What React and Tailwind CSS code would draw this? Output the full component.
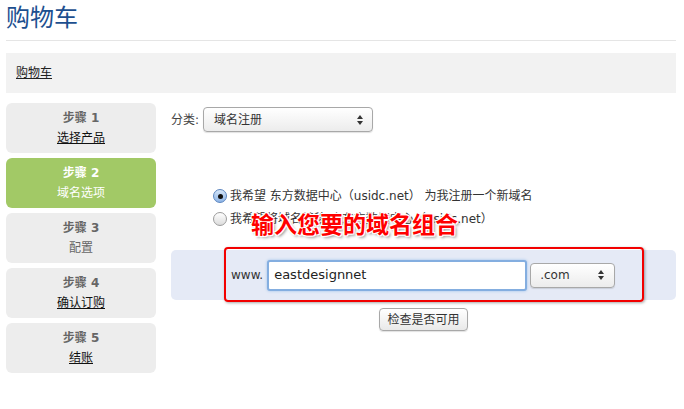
import React from 'react';

const font = 'font-["DejaVu_Sans","Noto_Sans_CJK_SC",sans-serif]';

const steps = [
  { n: 1, label: '选择产品', link: true },
  { n: 2, label: '域名选项', active: true },
  { n: 3, label: '配置' },
  { n: 4, label: '确认订购', link: true },
  { n: 5, label: '结账', link: true },
];

const Arrows = () => (
  <svg width="8" height="12" viewBox="0 0 8 12" className="shrink-0">
    <path d="M4 1 L7 5 L1 5 Z" fill="#333" />
    <path d="M4 11 L7 7 L1 7 Z" fill="#333" />
  </svg>
);

const Select = ({ value, className }) => (
  <div
    className={`flex items-center justify-between rounded-[4px] border border-[#a8a8a8] bg-gradient-to-b from-white to-[#ececec] shadow-[0_1px_1px_rgba(0,0,0,0.12)] ${className}`}
  >
    <span className="text-[12px] text-[#333]">{value}</span>
    <Arrows />
  </div>
);

const Radio = ({ checked }) =>
  checked ? (
    <span className="flex h-[14px] w-[14px] shrink-0 items-center justify-center rounded-full border border-[#5b85c0] bg-gradient-to-b from-[#d6e6f8] to-[#8db4e6]">
      <span className="h-[5px] w-[5px] rounded-full bg-[#111]" />
    </span>
  ) : (
    <span className="h-[14px] w-[14px] shrink-0 rounded-full border border-[#9c9c9c] bg-gradient-to-b from-white to-[#dcdcdc]" />
  );

export default function App() {
  return (
    <div className={`min-h-[409px] w-[684px] bg-white px-[6px] pr-[8px] ${font}`}>
      <h1 className="border-b border-[#e5e5e5] pb-[7px] pt-[3px] text-[24px] leading-[30px] font-normal text-[#1d4f8f]">
        购物车
      </h1>

      <div className="mt-[12px] flex h-[40px] items-center bg-[#f2f2f2] px-[10px]">
        <a href="#" className="text-[12px] text-[#222] underline">
          购物车
        </a>
      </div>

      <div className="mt-[10px] flex gap-[15px]">
        {/* steps */}
        <div className="flex w-[150px] shrink-0 flex-col gap-[5px]">
          {steps.map((s) => (
            <div
              key={s.n}
              className={`flex h-[50px] flex-col items-center justify-center gap-[4px] rounded-[6px] text-[12px] leading-[16px] ${
                s.active ? 'bg-[#a2c966] text-white' : 'bg-[#ededed] text-[#666]'
              }`}
            >
              <span className="font-bold">步骤 {s.n}</span>
              {s.link ? (
                <a href="#" className="text-[#111] underline">
                  {s.label}
                </a>
              ) : (
                <span>{s.label}</span>
              )}
            </div>
          ))}
        </div>

        {/* content */}
        <div className="relative flex-1">
          <div className="mt-[4px] flex h-[25px] items-center gap-[4px] text-[12px] text-[#444]">
            <span>分类:</span>
            <Select value="域名注册" className="h-[25px] w-[170px] pl-[10px] pr-[8px]" />
          </div>

          <div className="mt-[57px] flex flex-col gap-[9px] pl-[42px] text-[12px] text-[#333]">
            <label className="flex h-[14px] items-center gap-[3px]">
              <Radio checked />
              <span>我希望 东方数据中心（usidc.net） 为我注册一个新域名</span>
            </label>
            <label className="flex h-[14px] items-center gap-[3px]">
              <Radio />
              <span>我希望将域名转移到 东方数据中心（usidc.net）</span>
            </label>
          </div>

          <div className="mt-[24px] flex h-[50px] items-center rounded-[5px] bg-[#e5eaf6] pl-[60px]">
            <span className="text-[12px] text-[#333]">www.</span>
            <div className="ml-[4px] flex h-[31px] w-[260px] items-center rounded-[3px] border-2 border-[#84aee0] bg-white pl-[5px] shadow-[0_0_3px_#9cc0ea]">
              <span className="text-[13px] text-[#222]">eastdesignnet</span>
            </div>
            <Select value=".com" className="ml-[3px] h-[25px] w-[85px] pl-[9px] pr-[9px]" />
          </div>

          <div className="mt-[8px] flex justify-center">
            <button className="h-[23px] rounded-[4px] border border-[#a8a8a8] bg-gradient-to-b from-white to-[#e9e9e9] px-[7px] text-[12px] text-[#333] shadow-[0_1px_1px_rgba(0,0,0,0.12)]">
              检查是否可用
            </button>
          </div>

          {/* annotation overlay */}
          <div className="pointer-events-none absolute left-[53px] top-[144px] h-[55px] w-[420px] rounded-[4px] border-2 border-[#f20000] shadow-[1px_1px_3px_rgba(0,0,0,0.35)]" />
          <div className="pointer-events-none absolute left-[80px] top-[108px] whitespace-nowrap text-[23px] leading-[28px] font-bold text-[#ff0000] [text-shadow:0_0_2px_#fff,1px_1px_0_#fff,-1px_-1px_0_#fff,1px_-1px_0_#fff,-1px_1px_0_#fff,2px_2px_3px_rgba(0,0,0,0.45)]">
            输入您要的域名组合
          </div>
        </div>
      </div>
    </div>
  );
}
